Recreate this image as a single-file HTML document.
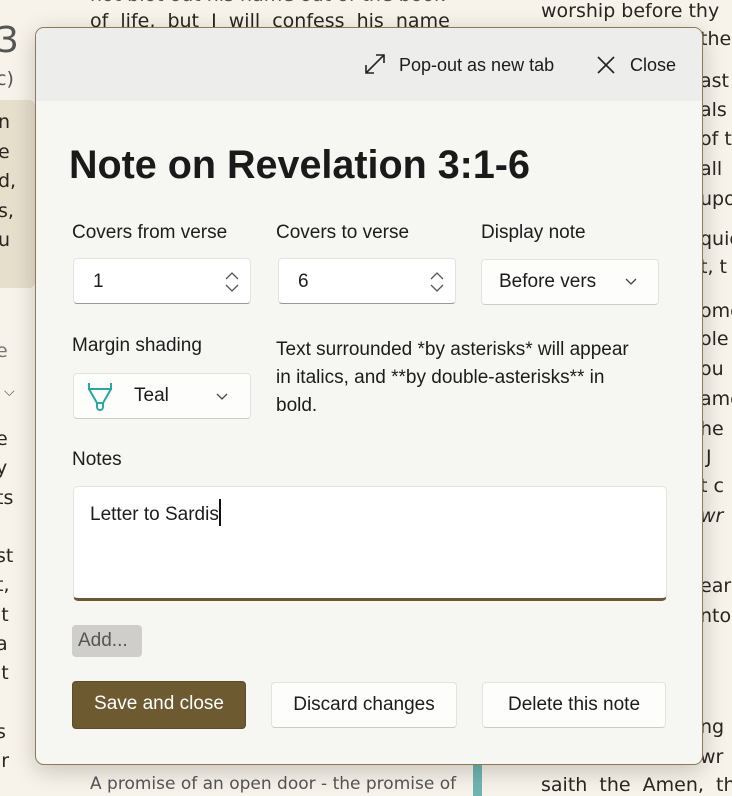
<!DOCTYPE html>
<html><head><style>
*{box-sizing:border-box;margin:0;padding:0}
body{width:732px;height:796px;overflow:hidden;background:#f7f3ea;font-family:"Liberation Sans",sans-serif;color:#1c1c1c;position:relative}
.bg{position:absolute;font-family:"DejaVu Sans",sans-serif;font-size:19px;color:#2a2520;white-space:nowrap}
.r{position:absolute;left:700px;font-family:"DejaVu Sans",sans-serif;font-size:19px;color:#2a2520;white-space:nowrap}
.dlg{position:absolute;left:35px;top:27px;width:668px;height:738px;border:1.5px solid #8b7a55;border-radius:9px;background:#f6f6f3;box-shadow:0 6px 24px rgba(0,0,0,.2);overflow:hidden}
.hdr{height:73px;background:#ededeb;position:relative}
.a{position:absolute;white-space:nowrap}
.lbl{font-size:19px;color:#1c1c1c}
.box{position:absolute;background:#fff;border:1px solid #e3e3e0;border-bottom:1.5px solid #999;border-radius:4px;height:46px;font-size:19px;padding:12px 0 0 19px}
.btn{position:absolute;background:#fdfdfc;border:1px solid #e2e2df;border-bottom-color:#ccc;border-radius:4px;height:46px;font-size:19px;text-align:center;line-height:44px}
</style></head><body>
<div class="bg" style="left:90px;top:-16px;color:#555">not blot out his name out of the book</div>
<div class="bg" style="left:90px;top:10px">of&nbsp; life,&nbsp; but&nbsp; I&nbsp; will&nbsp; confess&nbsp; his&nbsp; name</div>
<div class="bg" style="left:541px;top:0px">worship before thy</div>
<div class="bg" style="left:-4px;top:20px;font-size:36px;color:#555">3</div>
<div class="bg" style="left:-4px;top:68px;color:#555">c)</div>
<div style="position:absolute;left:0;top:100px;width:35px;height:188px;background:#e6dfcc;border-radius:0 6px 6px 0"></div>
<div class="bg" style="left:-2px;top:108px;line-height:29.5px">n<br>e<br>d,<br>s,<br>u</div>
<div class="bg" style="left:-4px;top:340px;color:#777">e</div>
<div class="bg" style="left:4px;top:384px;font-size:14px;color:#555">⌵</div>
<div class="bg" style="left:-4px;top:425px;line-height:29.3px">e<br>y<br>ts<br><br>st<br>t,<br>lt<br>a<br>it<br><br>s<br>ir</div>
<div class="r" style="top:28px">the</div>
<div class="r" style="top:70px">ast</div>
<div class="r" style="top:99px">als</div>
<div class="r" style="top:128px">of t</div>
<div class="r" style="top:158px">all</div>
<div class="r" style="top:188px">upo</div>
<div class="r" style="top:228px">quic</div>
<div class="r" style="top:256px">t, t</div>
<div class="r" style="top:300px">ome</div>
<div class="r" style="top:328px">ole</div>
<div class="r" style="top:358px">ou</div>
<div class="r" style="top:388px">ame</div>
<div class="r" style="top:418px">he</div>
<div class="r" style="top:446px">&nbsp;J</div>
<div class="r" style="top:475px">t c</div>
<div class="r" style="top:505px"><i>wr</i></div>
<div class="r" style="top:575px">ear,</div>
<div class="r" style="top:605px">nto</div>
<div class="r" style="top:716px">ng</div>
<div class="r" style="top:746px">wr</div>
<div class="bg" style="left:541px;top:774px">saith&nbsp; the&nbsp; Amen,&nbsp; the</div>
<div class="bg" style="left:90px;top:774px;font-size:17px;color:#555">A promise of an open door - the promise of</div>
<div style="position:absolute;left:473px;top:764px;width:9px;height:32px;background:#6fb5b0"></div>

<div class="dlg">
 <div class="hdr">
  <svg class="a" style="left:327px;top:24px" width="24" height="24" viewBox="0 0 24 24" fill="none" stroke="#222" stroke-width="1.6"><path d="M3 21L21 3M13 3h8v8M3 13v8h8"/></svg>
  <div class="a" style="left:363px;top:27px;font-size:18px">Pop-out as new tab</div>
  <svg class="a" style="left:560px;top:27px" width="20" height="20" viewBox="0 0 20 20" stroke="#222" stroke-width="1.6"><path d="M2 2L18 18M18 2L2 18"/></svg>
  <div class="a" style="left:594px;top:27px;font-size:18px">Close</div>
 </div>
 <div class="a" style="left:33px;top:115px;font-size:39.5px;font-weight:bold;color:#1a1a1a">Note on Revelation 3:1-6</div>
 <div class="a lbl" style="left:36px;top:194px">Covers from verse</div>
 <div class="a lbl" style="left:240px;top:194px">Covers to verse</div>
 <div class="a lbl" style="left:445px;top:194px">Display note</div>
 <div class="box" style="left:37px;top:230px;width:178px">1<svg class="a" style="right:10px;top:12px" width="16" height="22" viewBox="0 0 16 22" fill="none" stroke="#555" stroke-width="1.3"><path d="M2 8l6-6 6 6M2 14l6 6 6-6"/></svg></div>
 <div class="box" style="left:242px;top:230px;width:178px">6<svg class="a" style="right:10px;top:12px" width="16" height="22" viewBox="0 0 16 22" fill="none" stroke="#555" stroke-width="1.3"><path d="M2 8l6-6 6 6M2 14l6 6 6-6"/></svg></div>
 <div class="btn" style="left:445px;top:231px;width:178px;text-align:left;padding-left:17px;overflow:hidden">Before vers<svg class="a" style="left:143px;top:18px" width="12" height="8" viewBox="0 0 12 8" fill="none" stroke="#444" stroke-width="1.3"><path d="M1 1l5 5 5-5"/></svg></div>
 <div class="a lbl" style="left:36px;top:307px">Margin shading</div>
 <div class="btn" style="left:37px;top:345px;width:178px;text-align:left;padding-left:60px">Teal<svg class="a" style="left:142px;top:19px" width="12" height="8" viewBox="0 0 12 8" fill="none" stroke="#444" stroke-width="1.3"><path d="M1 1l5 5 5-5"/></svg>
  <svg class="a" style="left:13px;top:7px" width="26" height="32" viewBox="0 0 26 32" fill="none" stroke="#2aa8a0" stroke-width="2"><path d="M2 2v6h22V2M2 8l8 14h6l8-14M10 22v4a3 3 0 0 0 6 0v-4"/></svg></div>
 <div class="a" style="left:240px;top:308px;font-size:19px;line-height:28px;white-space:normal;width:372px">Text surrounded *by asterisks* will appear in italics, and **by double-asterisks** in bold.</div>
 <div class="a lbl" style="left:36px;top:421px">Notes</div>
 <div style="position:absolute;left:37px;top:458px;width:594px;height:115px;background:#fff;border:1px solid #e3e3e0;border-bottom:3px solid #6b5934;border-radius:5px;font-size:19px;padding:12px 16px">Letter to Sardis<span style="display:inline-block;width:2px;height:27px;background:#111;vertical-align:-6px"></span></div>
 <div class="a" style="left:36px;top:597px;width:70px;height:32px;background:#cfcecb;border-radius:4px;font-size:19px;color:#555;line-height:32px;padding-left:6px">Add...</div>
 <div class="btn" style="left:36px;top:653px;width:174px;height:48px;background:#6e5a31;border-color:#5e4c28;color:#fff">Save and close</div>
 <div class="btn" style="left:235px;top:654px;width:186px">Discard changes</div>
 <div class="btn" style="left:446px;top:654px;width:184px">Delete this note</div>
</div>
</body></html>
